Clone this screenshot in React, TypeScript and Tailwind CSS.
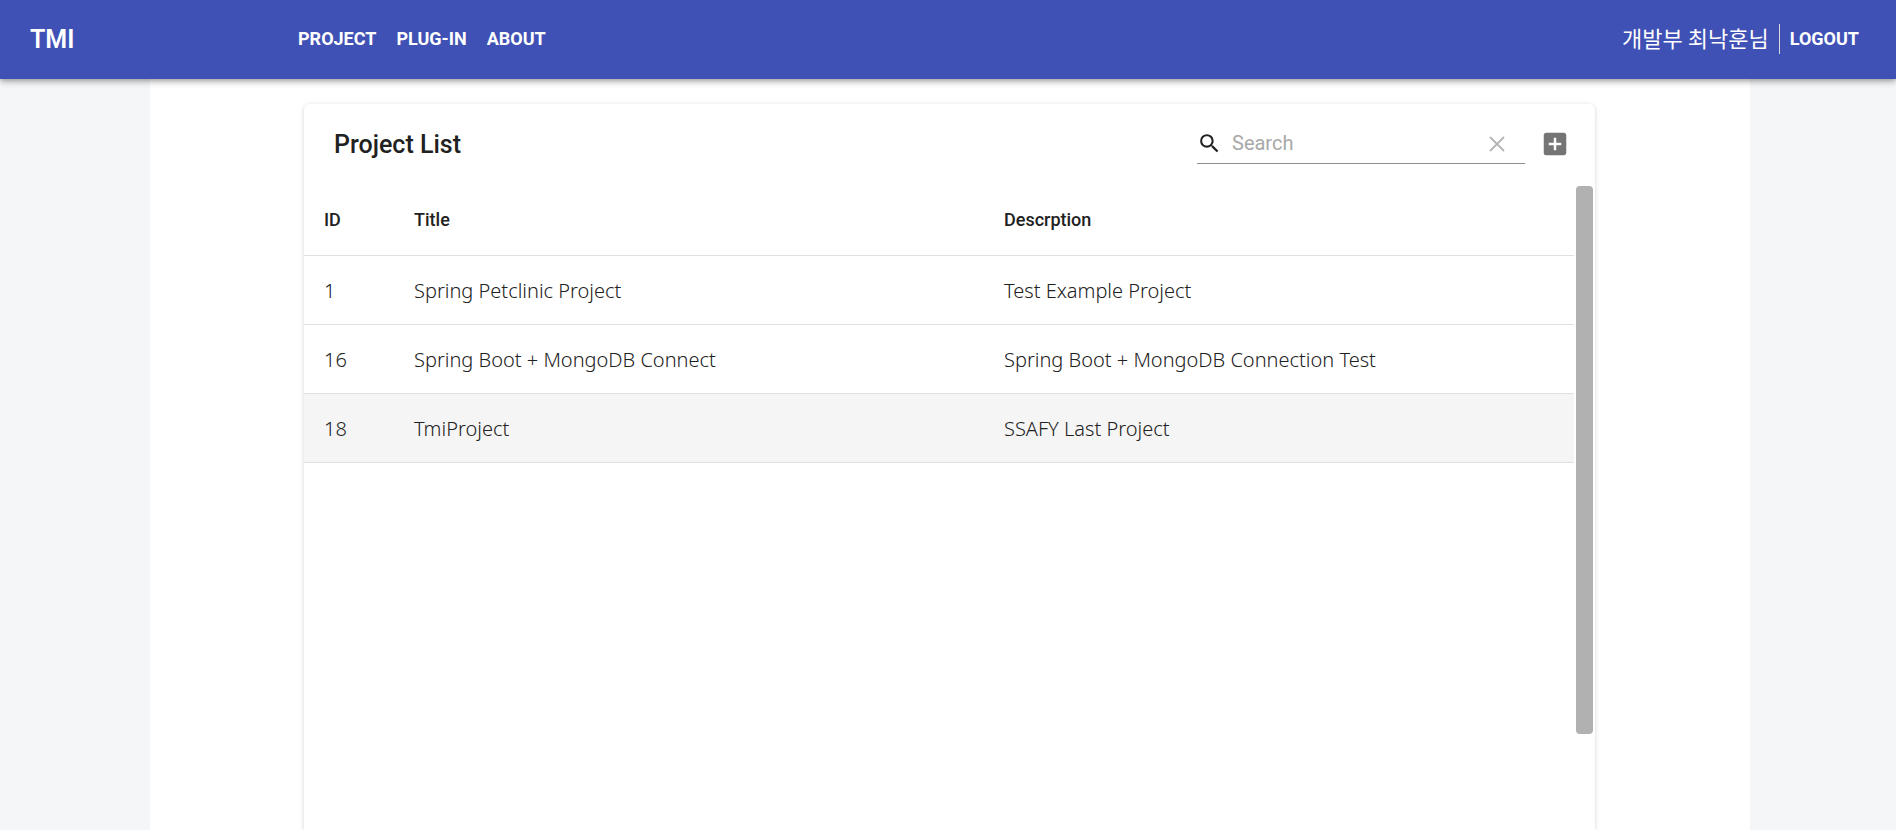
import React from "react";
import { MdAddBox, MdSearch } from "react-icons/md";

const navLinks = ["PROJECT", "PLUG-IN", "ABOUT"];

const projects = [
  { id: 1, title: "Spring Petclinic Project", description: "Test Example Project" },
  { id: 16, title: "Spring Boot + MongoDB Connect", description: "Spring Boot + MongoDB Connection Test" },
  { id: 18, title: "TmiProject", description: "SSAFY Last Project", active: true },
];

function Header() {
  return (
    <header className="relative z-10 flex h-[79px] shrink-0 items-center bg-[#3f51b5] pr-[37px] pb-0.5 pl-[30px] text-white shadow-[0_2px_4px_-1px_rgba(0,0,0,0.2),0_4px_5px_0_rgba(0,0,0,0.14),0_1px_10px_0_rgba(0,0,0,0.12)]">
      <a href="#home" className="w-[268px] pt-0.5 text-[25px] font-semibold">
        TMI
      </a>
      <nav className="flex gap-5 text-lg font-bold">
        {navLinks.map((label) => (
          <a key={label} href={`#${label.toLowerCase()}`}>
            {label}
          </a>
        ))}
      </nav>
      <div className="ml-auto flex items-center">
        <span className="pr-2.5 pb-1 font-['Noto_Sans_CJK_KR',sans-serif] text-[22px] leading-7 font-normal">개발부 최낙훈님</span>
        <span className="h-[30px] w-px bg-[#d9d9d9]" />
        <button type="button" className="pl-2.5 text-lg font-bold">
          LOGOUT
        </button>
      </div>
    </header>
  );
}

function Toolbar() {
  return (
    <div className="flex h-[82px] shrink-0 items-center pr-[25px] pb-0.5 pl-[30px]">
      <h1 className="pt-0.5 text-[25px] font-medium">Project List</h1>
      <div className="ml-auto flex h-10 w-[328px] items-center border-b border-[#8c8c8c]">
        <label htmlFor="search" className="shrink-0">
          <MdSearch className="size-[25px]" aria-label="Search" />
        </label>
        <input
          id="search"
          type="text"
          placeholder="Search"
          className="ml-2.5 min-w-0 flex-1 bg-transparent pb-0.5 text-xl outline-none placeholder:text-[#a8a8a8]"
        />
        <button type="button" aria-label="Clear search" className="mr-4 flex size-6 items-center justify-center">
          <svg viewBox="0 0 24 24" className="size-6" fill="none" stroke="#b5b5b5" strokeWidth="1.8">
            <path d="M5 5 19 19M19 5 5 19" />
          </svg>
        </button>
      </div>
      <button type="button" aria-label="Add project" className="ml-[15px] text-[#757575]">
        <MdAddBox className="size-[30px]" />
      </button>
    </div>
  );
}

function ProjectTable() {
  return (
    <div className="flex min-h-0 flex-1 gap-0.5 pr-0.5">
      <div className="min-w-0 flex-1">
        <table className="w-full table-fixed border-collapse text-left">
          <thead>
            <tr className="h-[69px] border-b border-[#e0e0e0] text-lg">
              <th className="w-[90px] px-5 font-medium">ID</th>
              <th className="px-5 font-medium">Title</th>
              <th className="px-5 font-medium">Descrption</th>
            </tr>
          </thead>
          <tbody className="font-['Noto_Sans',sans-serif] text-xl font-light">
            {projects.map((p) => (
              <tr key={p.id} className={p.active ? "h-[69px] border-b border-[#e0e0e0] bg-[#f5f5f5]" : "h-[69px] border-b border-[#e0e0e0]"}>
                <td className="px-5 pt-0.5">{p.id}</td>
                <td className="px-5 pt-0.5">{p.title}</td>
                <td className="px-5 pt-0.5">{p.description}</td>
              </tr>
            ))}
          </tbody>
        </table>
      </div>
      <div className="h-[548px] w-[17px] rounded bg-[#b1b1b1]" />
    </div>
  );
}

export default function App() {
  return (
    <div className="flex h-screen flex-col overflow-hidden bg-[#f4f6f8] font-[Roboto,sans-serif] text-[#212121]">
      <Header />
      <main className="flex min-h-0 flex-1 flex-col pr-[146px] pl-[150px]">
        <div className="flex min-h-0 flex-1 flex-col bg-white pt-[25px] pr-[155px] pl-[154px]">
          <section className="flex min-h-0 flex-1 flex-col rounded-t-md bg-white shadow-[0_2px_1px_-1px_rgba(0,0,0,0.12),0_1px_1px_0_rgba(0,0,0,0.06),0_1px_5px_0_rgba(0,0,0,0.16)]">
            <Toolbar />
            <ProjectTable />
          </section>
        </div>
      </main>
    </div>
  );
}
